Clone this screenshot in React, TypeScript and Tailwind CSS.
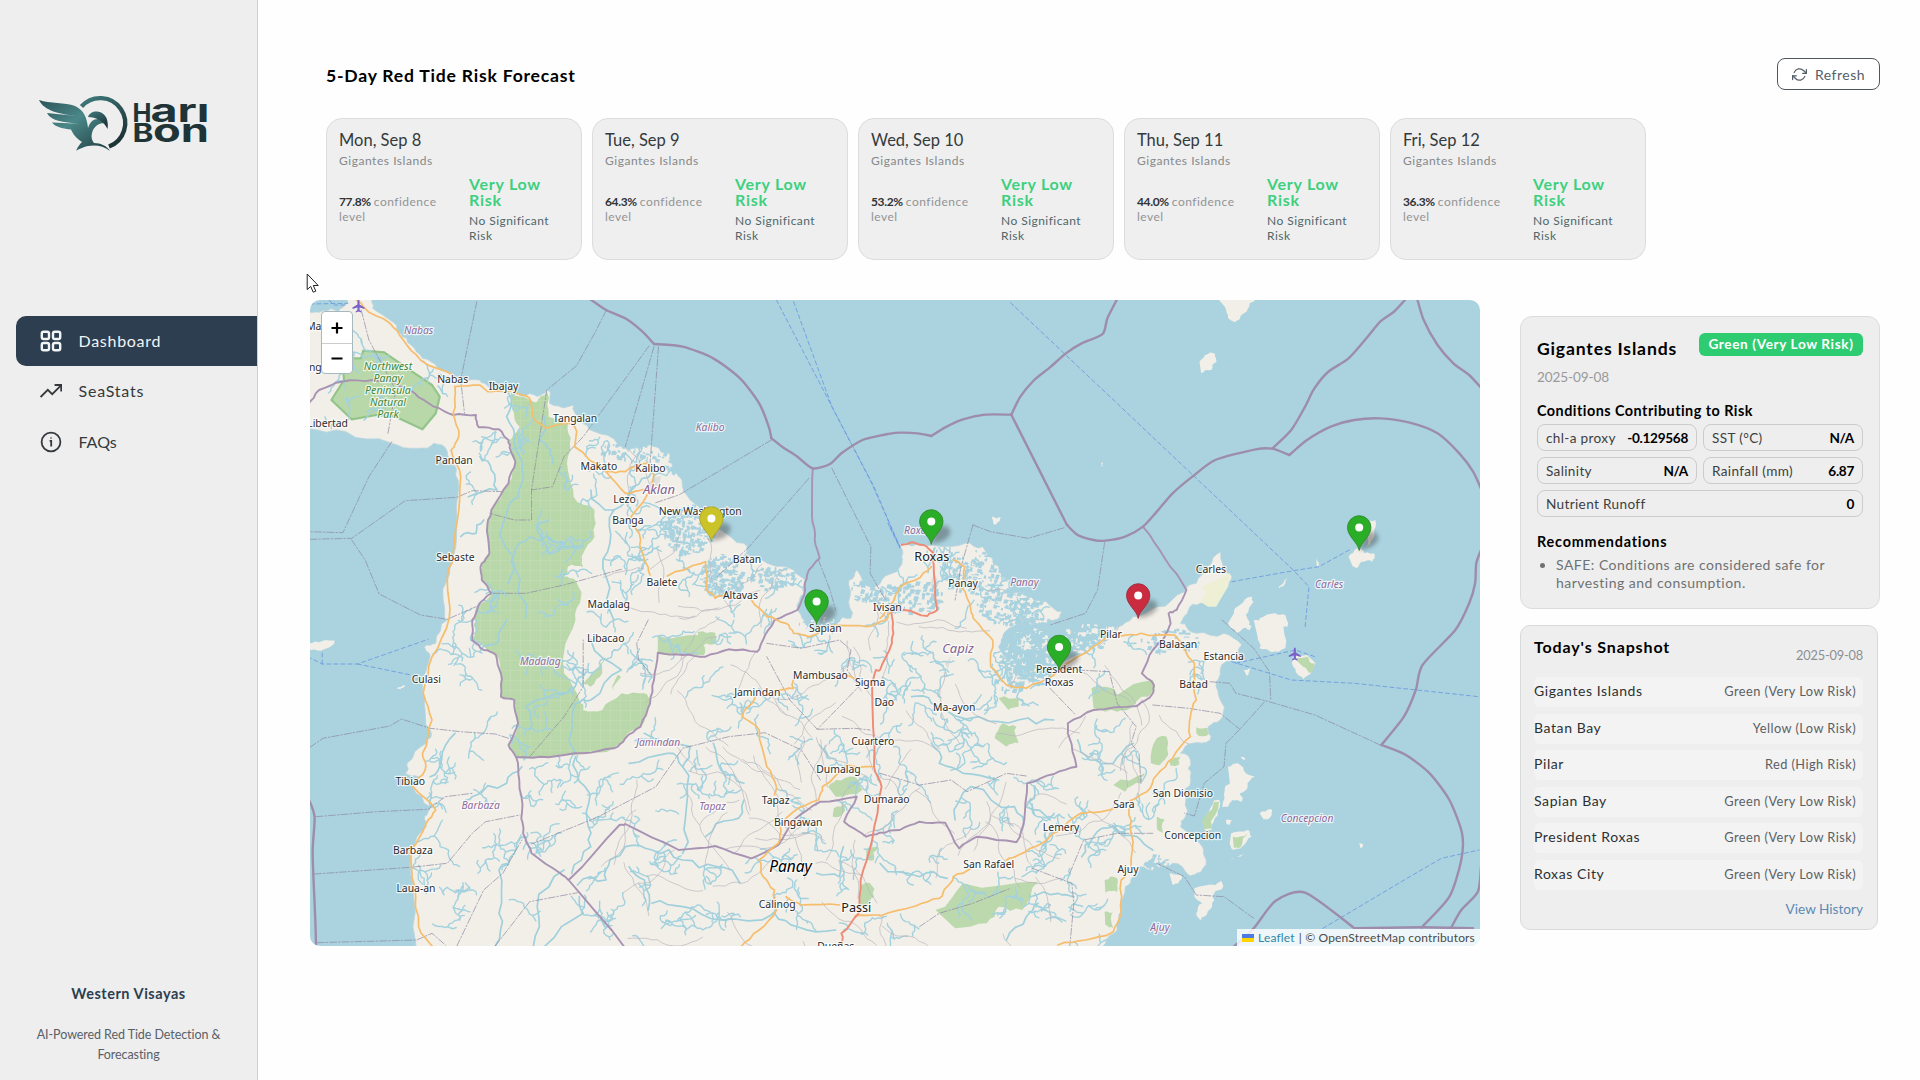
import React from "react";

/* ---------- map geometry ---------- */

// The survey is digitised on four overlapping sheets: [offsetX, offsetY, scaleX, scaleY].
type Sheet = [number, number, number, number];
const NW: Sheet = [-10, -10, 0.38265, 0.33333];
const NE: Sheet = [570, -10, 0.39541, 0.33333];
const SW: Sheet = [-10, 320, 0.38265, 0.33333];
const SE: Sheet = [570, 320, 0.39541, 0.33333];
type P = [number, number];
type Seg = [Sheet, string];

const pts = (segs: Seg[]): P[] =>
  segs.flatMap(([s, str]) =>
    str.trim().split(/\s+/).map((p) => {
      const [x, y] = p.split(",").map(Number);
      return [s[0] + x * s[2], s[1] + y * s[3]] as P;
    })
  );

const rng = (seed: number) => {
  let a = seed >>> 0;
  return () => {
    a = (a + 0x6d2b79f5) | 0;
    let t = Math.imul(a ^ (a >>> 15), 1 | a);
    t = (t + Math.imul(t ^ (t >>> 7), 61 | t)) ^ t;
    return ((t ^ (t >>> 14)) >>> 0) / 4294967296;
  };
};

// Midpoint displacement gives coasts and rivers their ragged edge.
const rough = (p: P[], amp: number, seed = 7): P[] => {
  const r = rng(seed);
  let cur = p;
  for (let k = 0; k < 2; k++) {
    const next: P[] = [cur[0]];
    for (let i = 1; i < cur.length; i++) {
      const [ax, ay] = cur[i - 1];
      const [bx, by] = cur[i];
      const d = Math.hypot(bx - ax, by - ay);
      const m = Math.min(amp, d * 0.22) * (r() * 2 - 1);
      next.push([(ax + bx) / 2 - ((by - ay) / (d || 1)) * m, (ay + by) / 2 + ((bx - ax) / (d || 1)) * m]);
      next.push([bx, by]);
    }
    cur = next;
  }
  return cur;
};

const line = (p: P[], close = false) =>
  "M" + p.map(([x, y]) => x.toFixed(1) + " " + y.toFixed(1)).join("L") + (close ? "Z" : "");

const curve = (p: P[]) => {
  if (p.length < 3) return line(p);
  let d = "M" + p[0].join(" ");
  for (let i = 0; i < p.length - 1; i++) {
    const a = p[i - 1] || p[i], b = p[i], c = p[i + 1], e = p[i + 2] || c;
    d += `C${b[0] + (c[0] - a[0]) / 8} ${b[1] + (c[1] - a[1]) / 8} ${c[0] - (e[0] - b[0]) / 8} ${c[1] - (e[1] - b[1]) / 8} ${c[0]} ${c[1]}`;
  }
  return d;
};

const inside = (poly: P[], x: number, y: number) => {
  let r = false;
  for (let i = 0, j = poly.length - 1; i < poly.length; j = i++) {
    const [xi, yi] = poly[i], [xj, yj] = poly[j];
    if (yi > y !== yj > y && x < ((xj - xi) * (y - yi)) / (yj - yi) + xi) r = !r;
  }
  return r;
};

const MAINLAND = pts([
  [NW, "20,62 60,62 100,66 125,40 130,20 185,20 190,55 235,90 262,130 290,165 320,205 360,235 400,265 470,270 492,290 550,292 590,318 630,315 648,300 652,340 700,350 715,345 730,385 770,425 830,462 870,475 930,470 965,490 972,520 1000,590 1030,640 1060,690 1100,720 1160,760 1168,785 1145,800 1200,805 1290,840 1320,870 1318,910 1300,960 1330,1010 1400,995 1440,985 1437,920 1435,870 1455,840 1475,880 1500,900 1520,870 1568,830"],
  [NE, "55,800 50,765 110,765 160,770 215,760 260,770 300,830 330,870 330,900 300,910 360,905 420,935 460,965 440,990 395,1000 350,1000"],
  [SE, "310,50 300,80 315,110 340,160 380,190 430,175 440,140 500,105 560,60 590,30"],
  [NE, "600,1010 640,980 700,950 770,905 800,880 830,830 862,785 868,830 890,860 880,890 850,950 810,940 780,960 760,1000"],
  [SE, "770,10 800,40 870,40 915,75 900,110 860,150 850,200 865,250 860,300 830,320 835,360 790,370 760,400 785,420 785,470 770,520 772,590 760,620 815,680 825,720 800,760 780,765 740,730 700,745 655,740 640,770 620,800 612,870 600,930 570,970 560,1010"],
  [SW, "305,1010 297,830 290,690 330,620 325,590 340,560 295,500 310,470 275,460 280,430 330,370 340,330 325,250 320,190 340,110 325,80 355,70 385,0"],
  [NW, "378,985 385,870 400,800 410,680 415,590 400,520 385,485 350,460 310,475 235,458 120,425 20,415"],
]);

const ISLANDS: Seg[] = [
  [NE, "850,20 950,20 935,40 920,70 895,97 880,85 872,50"],
  [NE, "808,215 822,195 848,192 851,215 838,240 812,250"],
  [NE, "1240,692 1253,690 1250,730 1240,760 1230,770 1232,735"],
  [NE, "1185,800 1205,775 1225,790 1250,790 1245,815 1218,815 1205,835 1195,828"],
  [NE, "283,680 305,682 300,695 288,705"], [NE, "1008,890 1030,865 1025,880 1010,895"], [NE, "1103,800 1110,825 1105,830"],
  [NE, "895,970 910,945 940,920 945,935 925,975 935,1000 900,1030 880,1000"],
  [NE, "960,985 1000,970 1025,975 1030,1010 960,1010"], [SE, "945,0 1027,0 1025,85 990,97 960,85 955,50"],
  [SE, "920,0 940,20 935,30 915,20"], [SE, "1045,110 1080,105 1102,130 1090,160 1070,178 1058,165 1042,130"],
  [SE, "880,440 905,430 925,460 948,470 930,500 910,520 915,545 890,540 880,560 866,560 872,510 885,490"],
  [SE, "960,580 990,568 988,590 970,598"], [SE, "888,640 930,630 940,650 915,680 895,690 885,665"],
  [SE, "795,805 850,795 862,782 868,800 845,820 840,860 820,890 810,900 800,880 815,850 795,830"],
  [SE, "732,760 762,765 755,790 740,795"], [SE, "820,630 832,590 845,540 858,540 855,570 845,600 838,630"],
  [SE, "875,600 890,600 885,614 876,612"], [SE, "912,412 925,415 920,420"], [SE, "920,150 936,145 928,168"],
  [SW, "20,68 60,62 92,62 85,75 55,92 20,85"], [SW, "252,205 275,195 262,208"], [SE, "1212,670 1222,675 1215,684"],
  [NE, "560,518 564,518 563,530 560,528"], [SE, "887,718 900,712 920,702 900,712"],
];

const FOREST = pts([
  [NW, "550,305 600,330 620,335 645,305 650,380 700,400 705,460 700,540 715,620 770,660 770,740 740,790 740,830 700,830 690,860 720,870 735,920 720,990"],
  [SW, "720,0 690,100 690,160 730,240 740,270 790,270 840,220 900,220 915,250 890,320 850,355 820,385 740,400 650,412 565,412 545,375 570,310 560,240 525,230 525,160 512,105 450,60 460,0"],
  [NW, "465,950 500,910 475,870 475,820 495,790 490,700 500,660 545,580 563,515 545,450 555,440 575,420 560,380"],
]);
const WOODS: Seg[] = [
  [SW, "935,45 1040,45 1040,36 1085,38 1085,70 1055,75 1055,105 935,98"], [SW, "1380,500 1400,480 1450,470 1470,510 1400,530"],
  [SW, "1395,565 1430,550 1410,590 1392,590"], [SW, "1465,800 1490,790 1500,830 1480,860 1462,850"], [SW, "1480,690 1510,680 1500,720 1480,720"],
  [SW, "780,140 800,110 790,160 760,200 740,190"], [SW, "830,165 840,170 820,215 815,200"],
  [SE, "535,205 570,200 600,225 690,180 690,215 640,258 600,275 540,265"], [SE, "290,355 310,310 345,320 350,370 320,380"],
  [SE, "685,430 700,355 725,350 720,420 700,435"], [SE, "140,870 210,790 400,785 360,870 300,860 270,910 190,925"],
  [SE, "590,495 670,460 660,490 620,515"], [SE, "730,420 760,410 755,435 735,437"], [SE, "300,235 355,235 350,260 325,270"],
  [SE, "700,590 720,600 715,640 700,620"], [SE, "568,780 600,775 600,815 570,818"], [SE, "568,875 595,870 590,925 570,915"],
  [SE, "1050,118 1080,110 1100,130 1085,160 1070,140"], [SE, "892,650 930,640 915,675 895,685"], [SE, "820,628 845,545 857,545 840,625"], [SE, "800,322 830,325 832,342 800,340"],
];
const PARK: Seg = [NW, "165,182 220,187 300,250 345,285 365,320 355,370 320,418 250,380 200,375 135,388 82,330 115,270 110,205 160,205"];

const BORDERS: Seg[][] = [
  [[NW, "755,25 800,60 850,85 895,125 925,162"]],
  [[NW, "925,162 1000,170 1080,205 1150,265 1200,340 1225,410 1232,445"]],
  [[NW, "1232,445 1260,470 1300,500 1340,535 1385,522 1415,490 1470,450 1515,437"], [NE, "20,432 50,428 95,430 130,438"]],
  [[NE, "130,438 165,412 210,388 265,374 332,374"]],
  [[NE, "332,374 473,705"]],
  [[NE, "473,705 500,735 540,750 570,752 620,740 665,710 700,665 740,610 790,560 848,510 950,478 992,476 1035,495"]],
  [[NE, "1035,495 1080,450 1140,410 1200,390 1265,385 1340,398 1410,430 1465,490 1500,545 1525,610"]],
  [[NE, "332,374 355,320 390,270 430,232 470,190 510,160 563,132 575,85 603,20"]],
  [[NE, "992,476 1040,420 1075,350 1097,298 1133,246 1185,205 1230,145 1265,95 1300,65 1335,20"]],
  [[NE, "1357,20 1375,90 1410,165 1450,220 1490,255 1525,300"]],
  [[NE, "1520,780 1508,820 1505,880 1490,940 1455,1020"], [SE, "1372,135 1355,210 1325,290 1268,375"]],
  [[SE, "1268,375 1330,405 1390,460 1440,540 1472,640 1470,720 1440,830 1370,922"]],
  [[SE, "1370,922 1200,925"]],
  [[SE, "1200,925 1075,818 1000,843 945,925 890,985"]],
  [[SE, "1370,922 1500,925"]], [[SE, "1520,740 1512,815 1470,870 1445,922"]],
  [[SW, "20,530 38,590 33,700 40,900 42,985"]],
];
const PROVINCES: Seg[][] = [
  [[NE, "665,710 720,805 775,900 750,960 730,970 735,1000"], [SE, "728,30 720,50 690,90 662,160 690,190 690,220 650,258 540,270 475,310 478,350 497,440 440,462 372,490 365,600 345,667 245,650 200,685 165,608 100,605 50,630 0,638"], [SW, "1480,650 1422,605 1455,530 1360,545 1290,600 1250,675 1180,715 1085,678 990,690 850,612 835,615 702,780"]],
  [[NW, "1340,535 1338,680 1345,750 1358,805 1325,855 1320,900 1300,960"], [SW, "1240,0 1210,60 1195,95 1120,88 1060,110 1000,105 935,98 925,180 915,250 890,320 850,355 820,385 740,400 650,412 565,412 573,480 580,580 583,640 605,700 680,760 702,780 850,985"]],
  [[NW, "20,345 50,300 110,275 190,270 245,275 300,310 350,350 400,375 460,375 467,412 520,418 545,450 550,480 563,515 545,580 500,660 490,700 495,790 475,820 475,870 500,910 465,950"], [SW, "450,0 450,60 480,90 512,105 525,160 525,230 560,240 570,310 545,375 565,412"]],
];
const ADMIN: Seg[][] = [
  [[NW, "462,35 420,270 430,370"]], [[NW, "800,62 770,130 722,228 645,300 605,600 605,690 560,690 495,670"]],
  [[NW, "912,168 740,440 690,500 660,590 605,600"]], [[NW, "925,170 850,470"]], [[NW, "937,170 915,520"]],
  [[NW, "1232,450 990,615 925,640"]], [[NW, "1330,565 1170,775 1090,860"]], [[NW, "1390,535 1492,770 1490,850 1530,930"]],
  [[NW, "240,455 180,560 112,728 26,725"]], [[NW, "26,748 135,745 275,632 410,622 450,602 530,605"]], [[NW, "135,750 170,810 207,912 315,975 385,988 460,950"]],
  [[NW, "1355,810 1385,900 1400,960"]], [[NW, "505,910 590,910 690,885 840,838"]], [[NW, "160,60 180,150 250,300 230,430"]],
  [[NE, "235,705 280,725 375,745 470,712"]], [[NE, "235,705 205,830 190,930"]], [[NE, "568,758 550,900 520,970 430,1005"]],
  [[SW, "26,382 60,355 235,318 265,297 340,325 420,335 510,342 545,355"]], [[SW, "42,590 200,575 335,568 380,530 450,520"]],
  [[SW, "38,762 290,742 385,730 450,640 485,605 575,585"]], [[SW, "45,968 305,960 345,940 380,975"]],
  [[SW, "600,410 690,290 740,200 740,60"]], [[SW, "605,672 780,590 930,500 1000,385 1120,350 1215,338 1310,390 1360,480"]],
  [[SW, "410,978 480,810 530,760 580,660"]], [[SW, "510,978 600,845 725,818"]], [[SW, "1220,70 1310,85 1410,60 1440,90 1430,150 1460,200 1352,328 1280,240 1220,110"]],
  [[SW, "1352,328 1450,325 1490,330"]], [[SW, "910,0 880,70 885,120 920,165"]],
  [[SE, "1265,375 1100,285 975,242 910,328 875,370 870,440 820,490 795,588 770,580"]], [[SE, "865,0 945,85 985,155 988,240"]],
  [[SE, "835,185 885,190 900,220 975,242"]], [[SE, "690,255 780,265 860,280 910,328"]], [[SE, "430,205 495,285"]], [[SE, "500,150 580,155 600,250 648,320 635,370 655,400 660,490"]],
  [[SE, "945,895 870,830 800,825 770,770 700,730"]], [[SE, "385,745 485,790 490,850 480,978"]], [[SE, "0,460 100,495 180,480 220,515 320,460 370,468"]],
  [[SE, "480,760 515,660 600,640 690,640"]], [[SE, "100,920 150,880 235,850 330,805"]],
];
const FERRIES: Seg[][] = [
  [[NW, "1245,30 1490,570 1568,770"]], [[NW, "1290,35 1390,350 1500,590 1568,775"], [NE, "20,700 50,768"]], [[NE, "330,38 800,565 1045,840 1085,890 1075,1010"]],
  [[NE, "890,875 1045,842 1110,830 1190,778"]], [[SE, "900,130 1050,90 1100,110"]], [[SE, "890,125 1040,180 1200,190 1515,230"]], [[SE, "1120,925 1340,770 1420,715 1515,690"]],
  [[SW, "20,110 58,132 150,132 335,58"]], [[SW, "58,132 58,90"]], [[SW, "150,132 290,165"]], [[NW, "26,42 125,40"]], [[NW, "75,30 90,45 125,45"]],
];
const ROADS: Seg[][] = [
  [[NW, "140,22 165,50 235,100 270,150 315,210 400,255"]],
  [[NW, "405,290 470,285 500,305 560,300 600,325 612,390 645,415 700,400 718,410 718,470 800,545 850,545 905,520"]],
  [[NW, "800,545 850,610 900,598"]], [[NW, "920,545 922,590 865,680 890,750 900,810 915,855"]],
  [[NW, "960,858 1050,820 1060,815 1062,900 1085,925 1110,918"]], [[NW, "1180,930 1220,980 1270,1000"], [SW, "1290,40 1330,50 1400,15 1480,20 1530,0"], [NW, "1550,960 1568,940"]],
  [[NW, "405,290 400,370 415,440 395,480 420,560 410,700 400,800 385,870 390,985"], [SW, "345,110 322,220 345,300 320,400 327,450 295,500 355,570 330,610 290,690 300,800 310,920 350,985"]],
  [[SW, "1190,230 1155,290 1200,330 1220,440 1245,500 1240,525"]], [[SW, "1240,210 1290,205 1290,165"]], [[SW, "1430,165 1455,180"]],
  [[SW, "1495,440 1430,435 1365,500 1355,540 1290,575 1255,620 1250,670 1200,720 1210,770 1240,810 1245,870 1200,930 1150,985"]],
  [[SW, "1270,830 1310,855 1410,855"]], [[SW, "1450,888 1515,885"], [SE, "0,888 90,858 150,835 170,800 185,770 230,745"]],
  [[SE, "320,720 350,705 410,670 450,635 500,585 540,578 620,555 675,515 700,465 740,415 785,350 785,290 800,240 795,130 745,45 660,40 610,48"]],
  [[SE, "630,565 635,640 635,740 610,780 610,880 590,935 520,960 450,975"]],
  [[SE, "575,50 500,110 440,165 370,205 320,195 280,140 285,60 240,0"], [NE, "230,960 205,890 215,830 185,810"]],
  [[NE, "130,830 90,870 50,890 30,940 0,985"]],
];
const TRUNKS: Seg[][] = [
  [[NE, "55,765 75,758 110,765 135,790 137,860 145,960 120,978 60,960"]],
  [[NE, "30,960 33,1000"], [SE, "30,70 0,150"], [SW, "1505,150 1495,200 1500,440 1520,500 1495,660 1465,780 1460,880 1415,940 1415,985"]],
];
const RIVERS: Seg[][] = [
  [[NW, "590,985 560,830 530,700 570,620 580,540 560,460 540,380 545,310"]], [[NW, "660,520 655,480 625,450 640,380"]], [[NW, "545,880 560,790 600,740 690,760"]],
  [[NW, "820,990 800,860 810,760 820,660 760,600"]], [[NW, "820,660 870,590 920,545"]], [[NW, "470,500 500,540 515,600 440,620"]], [[NW, "420,740 460,730 480,690"]],
  [[NW, "650,690 620,720 650,790 700,770 740,770"]], [[SW, "470,95 520,60 540,0"]], [[SW, "600,330 590,260 650,230 710,200"]],
  [[SW, "720,410 745,500 750,600 760,680 710,760"]], [[SW, "405,340 370,420 340,470"]], [[SW, "720,400 720,250 760,240 840,150 760,60"]],
  [[SW, "580,440 540,490 450,530 430,560"]], [[SW, "850,680 810,720 800,780 725,795"]], [[SW, "850,680 920,690 1000,720 1090,740 1150,790"]],
  [[SW, "1000,700 1010,560 1000,440 1020,380 900,340"]], [[SW, "860,430 960,400 1000,440"]], [[SW, "1080,370 1100,450 1160,490"]], [[SW, "1060,650 1130,600 1160,540"]],
  [[SW, "510,978 520,880 520,750 560,700 590,650"]], [[SW, "610,978 620,860 690,750"]], [[SW, "730,830 740,880 640,978"]], [[SW, "860,740 900,780 910,870"]],
  [[SW, "920,850 1000,860 1100,900 1240,880 1300,920 1400,930"]], [[SW, "1350,760 1410,770 1420,680"]], [[SE, "80,230 130,250 250,290 350,300 440,300"]],
  [[SE, "130,370 150,430 210,460 300,480"]], [[SE, "500,360 530,420 590,430 640,370"]], [[SE, "360,630 340,560 230,500 190,600"]], [[SE, "390,500 370,560 430,600 440,580"]],
  [[SE, "0,730 100,770 170,775"]], [[SE, "400,850 370,890 320,960"]], [[SE, "380,830 450,820 490,830"]], [[SE, "510,710 540,650 590,620 650,650 690,690"]],
];

const streams: string[] = [];
const lanes: string[] = [];
{
  const r = rng(41);
  const walk = (x: number, y: number, dir: number, n: number, step: number, turn: number) => {
    const out: P[] = [[x, y]];
    let a = dir;
    for (let i = 0; i < n; i++) {
      a += (r() - 0.5) * turn + (dir - a) * 0.2;
      x += Math.cos(a) * step;
      y += Math.sin(a) * step;
      if (!inside(MAINLAND, x, y)) break;
      out.push([x, y]);
    }
    return out;
  };
  for (let i = 0; i < 380; i++) {
    const x = r() * 900, y = 30 + r() * 616;
    const dir = r() * 6.28;
    if (!inside(MAINLAND, x, y) || (inside(FOREST, x, y) && r() < 0.5)) continue;
    const main = walk(x, y, dir, 7 + r() * 10, 3.2, 2.3);
    streams.push(line(main));
    for (let k = 2; k < main.length; k += 3) {
      if (r() < 0.6) streams.push(line(walk(main[k][0], main[k][1], dir + (r() < 0.5 ? 0.9 : -0.9), 2 + r() * 4, 3, 1.8)));
    }
  }
  for (let i = 0; i < 150; i++) {
    const x = 290 + r() * 560, y = 100 + r() * 546;
    if (!inside(MAINLAND, x, y) || inside(FOREST, x, y)) continue;
    lanes.push(line(walk(x, y, r() * 6.28, 6 + r() * 9, 6, 1)));
  }
}

// Clusters of small cells [cx, cy, rx, ry, count] for fish ponds and for mudflats.
type Cluster = [number, number, number, number, number];
const PONDS: Cluster[] = [
  [378, 228, 26, 25, 210], [412, 275, 22, 22, 180], [462, 277, 22, 12, 80], [330, 150, 40, 10, 60], [370, 165, 18, 10, 60],
  [507, 320, 22, 10, 60], [560, 290, 20, 14, 60], [605, 296, 30, 16, 110], [665, 272, 34, 22, 170], [700, 305, 34, 18, 170], [722, 345, 34, 30, 260],
  [700, 375, 16, 16, 60], [770, 335, 28, 16, 60], [860, 340, 30, 12, 60], [846, 562, 12, 9, 40],
];
const FLATS: Cluster[] = [[720, 352, 26, 24, 70], [782, 338, 34, 16, 80], [735, 378, 20, 12, 40], [512, 322, 14, 8, 20]];
const cells = (list: Cluster[], seed: number) =>
  list.map(([cx, cy, rx, ry, n], k) => {
    const r = rng(seed + k);
    let d = "";
    for (let i = 0; i < n; i++) {
      const a = r() * 6.28, q = Math.sqrt(r());
      const x = cx + Math.cos(a) * q * rx, y = cy + Math.sin(a) * q * ry;
      const w = 1 + r() * 3.6, h = 1 + r() * 3.4;
      d += `M${x.toFixed(1)} ${y.toFixed(1)}l${w.toFixed(1)} ${(r() * 1.4).toFixed(1)}l${(-w * 0.3).toFixed(1)} ${h.toFixed(1)}l${(-w).toFixed(1)} -0.6z`;
    }
    return d;
  });
const ponds = cells(PONDS, 100);
const flats = cells(FLATS, 200);

type Label = [Sheet, number, number, string];
const TOWNS: Label[] = [
  [NW, 399, 269, "Nabas"], [NW, 532, 290, "Ibajay"], [NW, 719, 384, "Tangalan"], [NW, 72, 400, "Libertad"], [NW, 403, 511, "Pandan"],
  [NW, 781, 528, "Makato"], [NW, 916, 535, "Kalibo"], [NW, 848, 628, "Lezo"], [NW, 857, 691, "Banga"], [NW, 1046, 665, "New Washington"],
  [NW, 406, 801, "Sebaste"], [NW, 1168, 807, "Batan"], [NW, 946, 876, "Balete"], [NW, 1151, 916, "Altavas"], [NW, 807, 942, "Madalag"],
  [NW, 1535, 952, "Ivisan"], [SW, 799, 54, "Libacao"], [SW, 330, 177, "Culasi"], [SW, 1373, 24, "Sapian"], [SW, 1360, 167, "Mambusao"],
  [SW, 1195, 216, "Jamindan"], [SW, 1490, 187, "Sigma"], [SW, 1527, 246, "Dao"], [SW, 1497, 365, "Cuartero"], [SW, 288, 483, "Tibiao"],
  [SW, 1407, 448, "Dumalag"], [SW, 1243, 542, "Tapaz"], [SE, 17, 539, "Dumarao"], [SW, 1302, 606, "Bingawan"], [SW, 295, 690, "Barbaza"],
  [SW, 303, 806, "Laua-an"], [SW, 1247, 852, "Calinog"], [SW, 1400, 979, "Dueñas"],
  [NE, 210, 879, "Panay"], [NE, 837, 838, "Carles"], [SE, 584, 42, "Pilar"], [SE, 754, 73, "Balasan"], [SE, 869, 108, "Estancia"],
  [SE, 453, 149, "President"], [SE, 453, 187, "Roxas"], [SE, 793, 194, "Batad"], [SE, 188, 263, "Ma-ayon"], [SE, 766, 521, "San Dionisio"],
  [SE, 617, 554, "Sara"], [SE, 458, 622, "Lemery"], [SE, 791, 647, "Concepcion"], [SE, 275, 733, "San Rafael"], [SE, 627, 747, "Ajuy"],
  [NW, 36, 109, "Ma"], [NW, 40, 233, "ng"],
];
const CITIES: Label[] = [[NE, 131, 801, "Roxas"], [SW, 1454, 863, "Passi"]];
const WATERS: Label[] = [
  [NW, 310, 121, "Nabas"], [NW, 1072, 412, "Kalibo"], [NE, 95, 721, "Roxas"], [NE, 365, 878, "Panay"], [NE, 1136, 882, "Carles"],
  [SE, 1080, 594, "Concepcion"], [SE, 708, 921, "Ajuy"], [SW, 628, 124, "Madalag"], [SW, 936, 367, "Jamindan"], [SW, 472, 557, "Barbaza"], [SW, 1078, 560, "Tapaz"],
];

function Labels({ items, size, dy, className }: { items: Label[]; size: number; dy: number; className: string }) {
  return (
    <g fontSize={size} className={className}>
      {items.map(([s, x, y, t], i) => (
        <text key={i} x={s[0] + x * s[2]} y={s[1] + y * s[3] + dy}>{t}</text>
      ))}
    </g>
  );
}

function Pin({ x, y, fill, edge }: { x: number; y: number; fill: string; edge: string }) {
  return (
    <g transform={`translate(${x} ${y})`}>
      <path d="M0 2L4 -12C9 -19 20 -17 19 -9C18 -3 9 1 0 2Z" fill="#333" opacity=".38" filter="url(#soft)" />
      <path d="M0 2C-1.2 -5.5 -11.7 -11.5 -11.7 -20.6A11.7 11.7 0 0 1 11.7 -20.6C11.7 -11.5 1.2 -5.5 0 2Z" fill={fill} stroke={edge} strokeWidth=".9" />
      <circle cx="0" cy="-20.5" r="4" fill="#fff" />
    </g>
  );
}

const PLANE = "M0 -6.5C.9 -6.5 1.1 -5 1.1 -3.5V-1.6L6 1.6V3L1.1 1.5V4L2.8 5.4V6.4L0 5.6L-2.8 6.4V5.4L-1.1 4V1.5L-6 3V1.6L-1.1 -1.6V-3.5C-1.1 -5 -.9 -6.5 0 -6.5Z";

function RegionMap() {
  return (
    <div className="relative h-[646px] w-[1170px] shrink-0 overflow-hidden rounded-[10px] bg-[#aad3df]">
      <svg width="1170" height="646" viewBox="0 0 1170 646" fill="none" strokeLinejoin="round" strokeLinecap="round">
        <defs>
          <filter id="soft" x="-50%" y="-50%" width="200%" height="200%"><feGaussianBlur stdDeviation="2.2" /></filter>
          <pattern id="plots" width="10" height="10" patternUnits="userSpaceOnUse">
            <rect width="10" height="10" fill="#b9d8a9" />
            <path d="M0 .5H10M.5 0V10" stroke="#c3dcb4" strokeWidth=".7" />
          </pattern>
        </defs>
        <path d={line(rough(MAINLAND, 3, 3), true)} fill="#f2efe9" stroke="#bcd5dc" strokeWidth=".8" />
        {ISLANDS.map((s, i) => <path key={i} d={line(rough(pts([s]), 2, i), true)} fill="#f2efe9" />)}
        <path d={line(pts([[NE, "815,890 885,850 880,890 850,950 830,950 810,935 825,910"]]), true)} fill="#edf0d5" />
        <path d={line(rough(FOREST, 2, 5), true)} fill="url(#plots)" />
        {WOODS.map((s, i) => <path key={i} d={line(rough(pts([s]), 4, i + 20), true)} fill="#bcd9ad" />)}
        <path d={line(pts([PARK]), true)} fill="#b9d8a9" stroke="#93c58a" strokeWidth="2.2" />
        <path d="M337 186l6 -8l8 -2l-2 12l-6 4zM620 285l4 -12l5 10l-3 6zM635 363l6 -6l-3 12z" fill="#dfdedb" />
        <g fill="#f2efe9">{flats.map((p, i) => <path key={i} d={p} />)}</g>
        <g fill="#aad3df">{ponds.map((p, i) => <path key={i} d={p} />)}</g>
        <path d={streams.join("")} stroke="#a3d2de" strokeWidth="1.4" />
        {RIVERS.map((s, i) => <path key={i} d={line(rough(pts(s), 6, i + 60))} stroke="#a0d0dc" strokeWidth="1.7" />)}
        <path d={lanes.join("")} stroke="#b9b6bd" strokeWidth=".7" />
        {ADMIN.map((s, i) => <path key={i} d={line(pts(s))} stroke="#8d8ba3" strokeWidth=".9" strokeDasharray="7 2 1.5 2" opacity=".8" />)}
        {FERRIES.map((s, i) => <path key={i} d={line(pts(s))} stroke="#6f9be0" strokeWidth=".9" strokeDasharray="4 3" />)}
        {PROVINCES.map((s, i) => <path key={i} d={line(rough(pts(s), 1, i))} stroke="#a893b3" strokeWidth="1.9" />)}
        {BORDERS.map((s, i) => <path key={i} d={curve(pts(s))} stroke="#9d8dab" strokeWidth="2.4" />)}
        {ROADS.map((s, i) => <path key={i} d={line(rough(pts(s), 1.4, i + 9))} stroke="#f6bd6c" strokeWidth="1.7" />)}
        {TRUNKS.map((s, i) => <path key={i} d={line(rough(pts(s), 1, i + 2))} stroke="#ee8a76" strokeWidth="1.9" />)}
        <g fill="#7a62c9">
          <path d={PLANE} transform="translate(48.5 6)" />
          <path d={PLANE} transform="translate(984.8 354)" />
        </g>
        <g fontFamily="'Noto Sans', sans-serif" textAnchor="middle" strokeWidth="2.4" paintOrder="stroke" stroke="#ffffff" strokeOpacity=".75">
          <Labels items={WATERS} size={10.3} dy={3.6} className="fill-[#8d6a9c] italic" />
          <Labels items={TOWNS} size={10.4} dy={3.6} className="fill-[#2c2c2c]" />
          <Labels items={CITIES} size={12.6} dy={4.4} className="fill-[#222222]" />
          <g fontSize="13" className="fill-[#845f92] italic">
            <text x="349" y="193.6">Aklan</text>
            <text x="648" y="353">Capiz</text>
          </g>
          <text x="480.5" y="572" fontSize="15.5" className="fill-black italic">Panay</text>
          <g fontSize="10.6" className="fill-[#3c8a3c] italic">
            {["Northwest", "Panay", "Peninsula", "Natural", "Park"].map((t, i) => <text key={t} x="78" y={70.3 + i * 12}>{t}</text>)}
          </g>
        </g>
        <Pin x={401.4} y={239} fill="#cac428" edge="#a8a22c" />
        <Pin x={506.6} y={322} fill="#2aad27" edge="#31882a" />
        <Pin x={621.3} y={242} fill="#2aad27" edge="#31882a" />
        <Pin x={1049.2} y={248} fill="#2aad27" edge="#31882a" />
        <Pin x={828.2} y={316} fill="#cb2b3e" edge="#982e40" />
        <Pin x={749.1} y={367.5} fill="#2aad27" edge="#31882a" />
      </svg>
      <div className="absolute left-[11px] top-[11px] flex h-[63px] w-[32px] flex-col rounded-[4px] border border-[#a5b9bf] bg-white pt-[1px] text-black">
        <span className="flex flex-1 items-center justify-center border-b border-[#cccccc]">
          <svg width="12" height="12" viewBox="0 0 12 12" stroke="currentColor" strokeWidth="2.2"><path d="M6 .5V11.5M.5 6H11.5" /></svg>
        </span>
        <span className="flex flex-1 items-center justify-center">
          <svg width="12" height="12" viewBox="0 0 12 12" stroke="currentColor" strokeWidth="2.2"><path d="M.5 6.5H11.5" /></svg>
        </span>
      </div>
      <div className="absolute bottom-0 right-0 flex h-[17px] items-center bg-white/80 pl-[5px] pr-[5px] text-[12px] tracking-[0.014em] text-[#4a4a4a]">
        <svg width="12" height="8" viewBox="0 0 12 8" className="mr-1"><path fill="#4C7BE1" d="M0 0h12v4H0z" /><path fill="#FFD500" d="M0 4h12v4H0z" /></svg>
        <span className="text-[#2f86a6]">Leaflet</span>
        <span className="ml-[4px] whitespace-nowrap">| © OpenStreetMap contributors</span>
      </div>
    </div>
  );
}

/* ---------- sidebar ---------- */

function Logo() {
  return (
    <svg width="176" height="60" viewBox="0 0 176 60" className="ml-[38px] mt-[94px] overflow-visible">
      <defs>
        <linearGradient id="wing" x1="0" y1="0" x2="1" y2="1"><stop offset="0" stopColor="#2b5257" /><stop offset=".45" stopColor="#4b8889" /><stop offset="1" stopColor="#1f3a3f" /></linearGradient>
        <linearGradient id="ring" x1="0" y1="0" x2=".6" y2="1"><stop offset="0" stopColor="#3f7a7c" /><stop offset="1" stopColor="#1d3438" /></linearGradient>
      </defs>
      <path d="M43.5 12.5A25 25 0 1 1 71 52.5" fill="none" stroke="url(#ring)" strokeWidth="4.4" />
      <path d="M1 6C12 10 27 8 37 12C46 16 49 24 50 34C52 28 55 25 60 25C64 25 67 26 69 30C63 28 58 31 55 36C53 41 53 45 56 49C63 49 69 52 72 57C64 51 54 50 44 54C41 55 39 56 38 57C40 52 42 50 44 48C38 44 35 40 33 35.5C26 35 17 33 14 28.5L42 29.8C24 28 13 27 9 19L38 22C22 20 6 17 1 6Z" fill="url(#wing)" />
      <path d="M50 23C52 16 64 15 68.5 24C70 28 70 32 69.5 35C66 27 58 23 50 23Z" fill="url(#ring)" />
      <g fontFamily="Inter, sans-serif" fontWeight="700" className="fill-[#1f3437]">
        <text x="94.5" y="27.5" fontSize="25" textLength="19" lengthAdjust="spacingAndGlyphs">H</text>
        <text x="112.5" y="27.5" fontSize="32" textLength="59" lengthAdjust="spacingAndGlyphs">arı</text>
        <text x="94.5" y="48" fontSize="25" textLength="21" lengthAdjust="spacingAndGlyphs">B</text>
        <text x="115" y="48" fontSize="32" textLength="56" lengthAdjust="spacingAndGlyphs">on</text>
      </g>
    </svg>
  );
}

const NAV = [
  { label: "Dashboard", track: "tracking-[0.045em]", active: true, icon: <g strokeWidth="2.4"><rect x="1.8" y="1.8" width="7.2" height="7.2" rx="1.8" /><rect x="13" y="1.8" width="7.2" height="7.2" rx="1.8" /><rect x="1.8" y="13" width="7.2" height="7.2" rx="1.8" /><rect x="13" y="13" width="7.2" height="7.2" rx="1.8" /></g> },
  { label: "SeaStats", track: "tracking-[0.049em]", active: false, icon: <g strokeWidth="1.8"><path d="M.6 17L7.8 9.8L12.2 14.2L20.8 5.6" /><path d="M14.6 5H21.2V11.6" /></g> },
  { label: "FAQs", track: "", active: false, icon: <g strokeWidth="1.8"><circle cx="11" cy="11" r="9.4" /><path d="M9.6 9.8H11.2V15.6M11 6.6V7.6" /></g> },
];

function Sidebar() {
  return (
    <aside className="flex h-[1080px] w-[258px] shrink-0 flex-col border-r border-[#cfcfcf] bg-[#eeeeee]">
      <Logo />
      <nav className="mt-[162px] flex flex-col pl-4 text-[16px]">
        {NAV.map((n) => (
          <a key={n.label} className={n.active ? "flex h-[50px] items-center gap-[16.5px] rounded-l-[10px] bg-[#2c3e50] pl-[24px] text-[#f2f4f6]" : "flex h-[50.5px] items-center gap-[16.5px] pl-[24px] text-[#34393d]"}>
            <svg width="22" height="22" viewBox="0 0 22 22" fill="none" stroke="currentColor">{n.icon}</svg>
            <span className={n.track}>{n.label}</span>
          </a>
        ))}
      </nav>
      <div className="mb-[15px] mt-auto text-center">
        <div className="text-[14.5px] font-bold leading-[20px] tracking-[0.036em] text-[#2c3e50]">Western Visayas</div>
        <p className="mx-auto mt-[21px] w-[200px] text-[12.5px] leading-[20px] tracking-[-0.006em] text-[#596068]">AI-Powered Red Tide Detection &amp; Forecasting</p>
      </div>
    </aside>
  );
}

/* ---------- main ---------- */

const DAYS = [
  ["Mon, Sep 8", "77.8%"], ["Tue, Sep 9", "64.3%"], ["Wed, Sep 10", "53.2%"], ["Thu, Sep 11", "44.0%"], ["Fri, Sep 12", "36.3%"],
];

function DayCard({ day, pct }: { day: string; pct: string }) {
  return (
    <div className="h-[142px] w-[256px] rounded-[16px] border border-[#dcdcdc] bg-[#efefef] px-[12px] pt-[10px]">
      <div className="text-[16.5px] leading-[22px] text-[#343a3c]">{day}</div>
      <div className="mt-[1px] text-[12px] leading-[18px] tracking-[0.045em] text-[#85888a]">Gigantes Islands</div>
      <div className="mt-[6px] flex items-center">
        <div className="w-[130px] text-[12px] leading-[15px] text-[#929495]">
          <b className="tracking-[-0.03em] text-[#2f3436]">{pct}</b> <span className="tracking-[0.04em]">confidence<br />level</span>
        </div>
        <div className="w-[100px]">
          <div className="text-[16px] font-bold leading-[16px] tracking-[0.045em] text-[#3dd07e]">Very Low<br />Risk</div>
          <div className="mt-[4.5px] text-[12px] leading-[15px] tracking-[0.038em] text-[#50676b]">No Significant<br />Risk</div>
        </div>
      </div>
    </div>
  );
}

function Reading({ name, value, wide }: { name: string; value: string; wide?: boolean }) {
  return (
    <div className={wide ? "col-span-2 flex h-[27px] items-center justify-between rounded-[8px] border border-[#cccccc] px-[8px]" : "flex h-[27px] items-center justify-between rounded-[8px] border border-[#cccccc] px-[8px]"}>
      <span className="tracking-[0.025em] text-[#3c3f41]">{name}</span>
      <b className="tracking-[-0.022em] text-black">{value}</b>
    </div>
  );
}

function RiskPanel() {
  return (
    <section className="h-[293px] w-[360px] rounded-[12px] border border-[#dcdcdc] bg-[#eeeeee] px-[16px] pt-[16px]">
      <div className="flex items-start justify-between">
        <h2 className="mt-[3px] text-[17.6px] font-bold leading-[25px] tracking-[0.047em] text-black">Gigantes Islands</h2>
        <span className="flex h-[23px] items-center rounded-[6px] bg-[#2ecc71] px-[9.5px] text-[13.6px] font-bold tracking-[0.045em] text-white">Green (Very Low Risk)</span>
      </div>
      <div className="mt-[7px] text-[13.6px] leading-[18px] tracking-[-0.009em] text-[#999999]">2025-09-08</div>
      <h3 className="mt-[15px] text-[14.4px] font-bold leading-[20px] tracking-[0.033em] text-black">Conditions Contributing to Risk</h3>
      <div className="mt-[3px] grid grid-cols-2 gap-[6px] text-[13.6px] leading-[20px]">
        <Reading name="chl-a proxy" value="-0.129568" />
        <Reading name="SST (°C)" value="N/A" />
        <Reading name="Salinity" value="N/A" />
        <Reading name="Rainfall (mm)" value="6.87" />
        <Reading name="Nutrient Runoff" value="0" wide />
      </div>
      <h3 className="mt-[15px] text-[14.4px] font-bold leading-[20px] tracking-[0.055em] text-black">Recommendations</h3>
      <ul className="mt-[4px] list-disc pl-[19px] text-[14px] leading-[18px] tracking-[0.035em] text-[#6f7274]">
        <li>SAFE: Conditions are considered safe for<br />harvesting and consumption.</li>
      </ul>
    </section>
  );
}

const SNAPSHOT = [
  ["Gigantes Islands", "Green (Very Low Risk)"], ["Batan Bay", "Yellow (Low Risk)"], ["Pilar", "Red (High Risk)"],
  ["Sapian Bay", "Green (Very Low Risk)"], ["President Roxas", "Green (Very Low Risk)"], ["Roxas City", "Green (Very Low Risk)"],
];

function SnapshotPanel() {
  return (
    <section className="mt-[16px] h-[305px] w-[358px] rounded-[10px] border border-[#d6dbd9] bg-[#eeeeee] pl-[13px] pr-[14px] pt-[10px]">
      <div className="flex items-start justify-between">
        <h2 className="text-[16px] font-bold leading-[22px] tracking-[0.054em] text-black">Today&apos;s Snapshot</h2>
        <span className="mt-[9px] text-[12.8px] leading-[20px] tracking-[-0.015em] text-[#8d9092]">2025-09-08</span>
      </div>
      <div className="mt-[12px] flex flex-col gap-[6.5px]">
        {SNAPSHOT.map(([place, risk]) => (
          <div key={place} className="flex h-[30px] items-center justify-between rounded-[6px] bg-[#f3f3f3] pr-[7px]">
            <span className="-mt-[3px] text-[14px] tracking-[0.042em] text-[#2d3032]">{place}</span>
            <span className="text-[12.8px] tracking-[0.034em] text-[#5b6063]">{risk}</span>
          </div>
        ))}
      </div>
      <div className="mt-[9px] text-right text-[13.6px] leading-[20px] text-[#5c8ab4]">View History</div>
    </section>
  );
}

export default function App() {
  return (
    <div className="relative flex h-[1080px] w-[1920px] overflow-hidden bg-[#fefefe] font-['Lato',sans-serif]">
      <Sidebar />
      <main className="flex flex-1 flex-col pl-[52px] pt-[58px]">
        <header className="flex h-[36px] items-center justify-between pl-[16px] pr-[40px]">
          <h1 className="text-[17.6px] font-bold tracking-[0.044em] text-black">5-Day Red Tide Risk Forecast</h1>
          <button className="-mt-[4px] flex h-[32px] w-[103px] items-center justify-center gap-[8px] rounded-[8px] border border-[#4e555b] bg-white text-[14px] tracking-[0.034em] text-[#566068]">
            <svg width="15" height="15" viewBox="0 0 24 24" fill="none" stroke="currentColor" strokeWidth="2" strokeLinecap="round" strokeLinejoin="round">
              <path d="M23 4v6h-6M1 20v-6h6" /><path d="M3.5 9a9 9 0 0 1 14.9-3.4L23 10M1 14l4.6 4.4A9 9 0 0 0 20.5 15" />
            </svg>
            Refresh
          </button>
        </header>
        <div className="mt-[24px] flex gap-[10px] pl-[16px]">
          {DAYS.map(([day, pct]) => <DayCard key={day} day={day} pct={pct} />)}
        </div>
        <div className="mt-[40px] flex gap-[40px]">
          <RegionMap />
          <div className="pt-[16px]">
            <RiskPanel />
            <SnapshotPanel />
          </div>
        </div>
      </main>
      <svg width="14" height="21" viewBox="0 0 14 21" className="absolute left-[306px] top-[273px]">
        <path d="M1.2 1V16.6L4.7 13.4L7.2 19.2L9.8 18.1L7.3 12.5H12.2Z" fill="#fff" stroke="#222" strokeWidth="1" />
      </svg>
    </div>
  );
}
